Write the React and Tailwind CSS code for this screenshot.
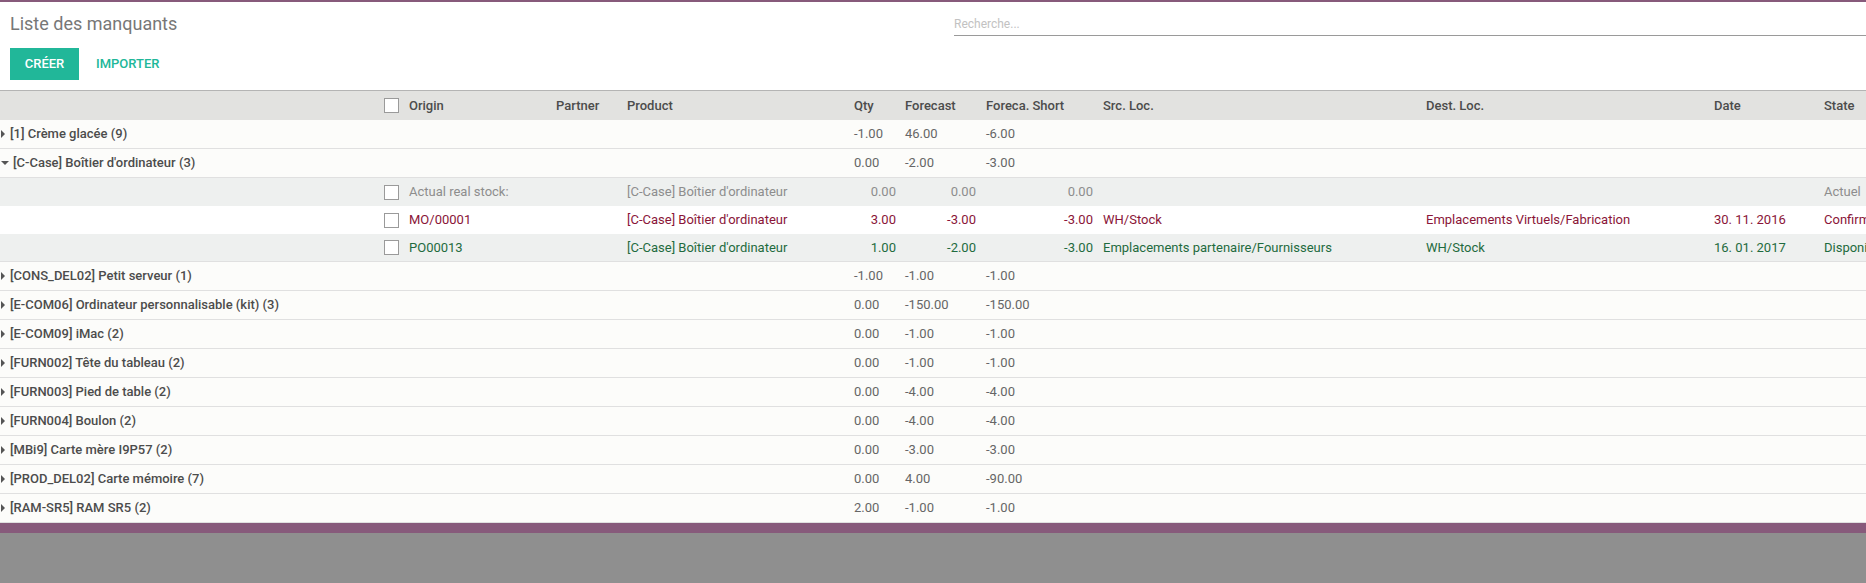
import React from 'react';

const cols = 'grid grid-cols-[376px_25px_147px_71px_227px_51px_81px_117px_323px_288px_110px_1fr]';

const groups = [
  { name: '[1] Crème glacée (9)', qty: '-1.00', fc: '46.00', short: '-6.00' },
  { name: "[C-Case] Boîtier d'ordinateur (3)", qty: '0.00', fc: '-2.00', short: '-3.00', open: true },
  { name: '[CONS_DEL02] Petit serveur (1)', qty: '-1.00', fc: '-1.00', short: '-1.00' },
  { name: '[E-COM06] Ordinateur personnalisable (kit) (3)', qty: '0.00', fc: '-150.00', short: '-150.00' },
  { name: '[E-COM09] iMac (2)', qty: '0.00', fc: '-1.00', short: '-1.00' },
  { name: '[FURN002] Tête du tableau (2)', qty: '0.00', fc: '-1.00', short: '-1.00' },
  { name: '[FURN003] Pied de table (2)', qty: '0.00', fc: '-4.00', short: '-4.00' },
  { name: '[FURN004] Boulon (2)', qty: '0.00', fc: '-4.00', short: '-4.00' },
  { name: '[MBi9] Carte mère I9P57 (2)', qty: '0.00', fc: '-3.00', short: '-3.00' },
  { name: '[PROD_DEL02] Carte mémoire (7)', qty: '0.00', fc: '4.00', short: '-90.00' },
  { name: '[RAM-SR5] RAM SR5 (2)', qty: '2.00', fc: '-1.00', short: '-1.00' },
];

const lines = [
  { origin: 'Actual real stock:', qty: '0.00', fc: '0.00', short: '0.00', src: '', dest: '', date: '', state: 'Actuel', color: 'text-[#8d8d8d]', bg: 'bg-[#eef0ef]' },
  { origin: 'MO/00001', qty: '3.00', fc: '-3.00', short: '-3.00', src: 'WH/Stock', dest: 'Emplacements Virtuels/Fabrication', date: '30. 11. 2016', state: 'Confirmé', color: 'text-[#8a1538]', bg: 'bg-white' },
  { origin: 'PO00013', qty: '1.00', fc: '-2.00', short: '-3.00', src: 'Emplacements partenaire/Fournisseurs', dest: 'WH/Stock', date: '16. 01. 2017', state: 'Disponible', color: 'text-[#1f6b3e]', bg: 'bg-[#eef0ef]' },
];

const Check = () => (
  <span className="inline-block w-[15px] h-[15px] border border-[#9a9a9a] bg-white"></span>
);

function GroupRow({ g }) {
  return (
    <div className={cols + ' h-[29px] items-center border-b border-[#e0e0e0] bg-[#fcfcfa]'}>
      <div className="col-span-5 flex items-center whitespace-nowrap">
        {g.open ? (
          <span className="ml-[1px] mr-[4px] w-0 h-0 border-x-[4px] border-x-transparent border-t-[4px] border-t-[#555]"></span>
        ) : (
          <span className="ml-[1px] mr-[5px] w-0 h-0 border-y-[4px] border-y-transparent border-l-[4px] border-l-[#555]"></span>
        )}
        <span className="font-medium text-[#4c4c4c]">{g.name}</span>
      </div>
      <div className="pl-2 text-[#666]">{g.qty}</div>
      <div className="pl-2 text-[#666]">{g.fc}</div>
      <div className="pl-2 text-[#666]">{g.short}</div>
    </div>
  );
}

function LineRow({ l, last }) {
  return (
    <div className={cols + ' h-[28px] items-center whitespace-nowrap ' + l.bg + ' ' + l.color + (last ? ' border-b border-[#e0e0e0]' : '')}>
      <div></div>
      <div className="pl-2 flex items-center"><Check /></div>
      <div className="pl-2">{l.origin}</div>
      <div className="pl-2"></div>
      <div className="pl-2">[C-Case] Boîtier d'ordinateur</div>
      <div className="text-right pr-[1px]">{l.qty}</div>
      <div className="text-right pr-[2px]">{l.fc}</div>
      <div className="text-right pr-[2px]">{l.short}</div>
      <div className="pl-2">{l.src}</div>
      <div className="pl-2">{l.dest}</div>
      <div className="pl-2">{l.date}</div>
      <div className="pl-2 overflow-hidden">{l.state}</div>
    </div>
  );
}

export default function App() {
  return (
    <div className="w-full h-[583px] overflow-hidden bg-[#8f8f8f] text-[13px] font-['Roboto','Liberation_Sans',sans-serif]">
      <div className="bg-white border-t-2 border-[#875a7b]">
        <div className="grid grid-cols-[954px_1fr] pt-[10px]">
          <div className="pl-[10px] text-[18px] leading-[24px] text-[#777]">Liste des manquants</div>
          <div className="h-[24px] border-b border-[#9a9a9a] flex items-center pt-[1px] text-[12px] text-[#c2c2c2]">Recherche...</div>
        </div>
        <div className="flex items-center mt-[12px] pl-[10px] pb-[10px]">
          <button className="h-[32px] w-[69px] bg-[#21b799] text-white text-[13px] font-medium uppercase">Créer</button>
          <button className="ml-[17px] text-[#21b799] text-[13px] font-medium uppercase">Importer</button>
        </div>
      </div>
      <div className="bg-[#fcfcfa]">
        <div className={cols + ' h-[30px] items-center border-t border-[#b4b4b4] bg-[#e2e2e0] font-medium text-[#4c4c4c] whitespace-nowrap'}>
          <div></div>
          <div className="pl-2 flex items-center"><Check /></div>
          <div className="pl-2">Origin</div>
          <div className="pl-2">Partner</div>
          <div className="pl-2">Product</div>
          <div className="pl-2">Qty</div>
          <div className="pl-2">Forecast</div>
          <div className="pl-2">Foreca. Short</div>
          <div className="pl-2">Src. Loc.</div>
          <div className="pl-2">Dest. Loc.</div>
          <div className="pl-2">Date</div>
          <div className="pl-2">State</div>
        </div>
        {groups.map((g) => (
          <React.Fragment key={g.name}>
            <GroupRow g={g} />
            {g.open && lines.map((l, i) => <LineRow key={l.origin} l={l} last={i === lines.length - 1} />)}
          </React.Fragment>
        ))}
      </div>
      <div className="h-[10px] bg-[#875a7b]"></div>
    </div>
  );
}
